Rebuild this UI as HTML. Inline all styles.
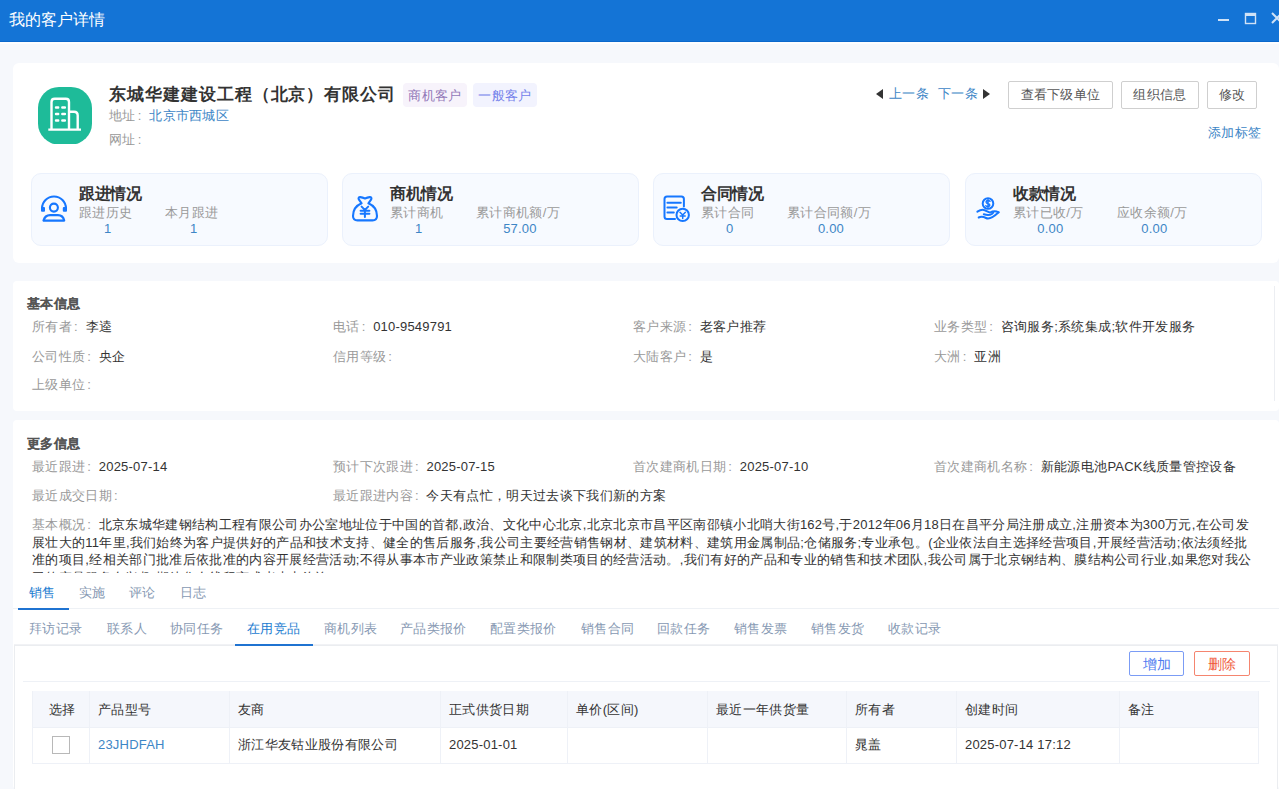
<!DOCTYPE html>
<html><head><meta charset="utf-8">
<style>
*{margin:0;padding:0;box-sizing:border-box}
html,body{width:1279px;height:789px;overflow:hidden;background:#f6f8fc;font-family:"Liberation Sans",sans-serif;font-size:13px;color:#333;letter-spacing:.33px}
.a{position:absolute;white-space:nowrap;line-height:1}
#hdr{position:absolute;left:0;top:0;width:1279px;height:42px;background:#1474d6;border-bottom:1px solid #0a68cc}
#hdr .t{left:9px;top:12px;font-size:16px;color:#fff;letter-spacing:0}
.card{position:absolute;background:#fff;border-radius:4px}
.lbl{color:#999}
.c{display:inline-block;width:13.5px;padding-left:2px}
.n{letter-spacing:.2px}
.val{color:#333}
.lnk{color:#3d86c6}
.btn{position:absolute;top:81px;height:28px;border:1px solid #cfcfcf;border-radius:2px;background:#fff;color:#555;font-size:13px;line-height:26px;text-align:center}
.tag{position:absolute;top:83px;height:24px;border-radius:4px;line-height:25px;font-size:13px;text-align:center}
.sc{position:absolute;top:173px;width:297px;height:73px;background:#f7faff;border:1px solid #ebf1fc;border-radius:10px}
.sc .ti{position:absolute;left:47px;top:12px;font-size:16px;font-weight:bold;color:#333;line-height:1;letter-spacing:-.3px}
.sc .it{position:absolute;top:32px;line-height:1}
.sc .it .l{color:#999;font-size:13px;line-height:1;white-space:nowrap}
.sc .it .v{color:#3d86c6;font-size:13px;text-align:center;margin-top:3px;line-height:1;padding-left:4px}
.sc svg{position:absolute}
.sec{position:absolute;left:27px;font-size:13px;font-weight:bold;color:#555;-webkit-text-stroke:.1px #555}
.row{position:absolute;white-space:nowrap;line-height:1;font-size:13px}
.tab{position:absolute;top:586px;font-size:13px;color:#8799b3;line-height:1}
.stab{position:absolute;top:622px;font-size:13px;color:#8799b3;line-height:1}
table{position:absolute;left:32px;top:690px;border-collapse:collapse;table-layout:fixed;font-size:13px}
td,th{border:1px solid #edf0f5;height:36px;padding:0 9px;text-align:left;font-weight:normal;white-space:nowrap}
th{background:#f5f7fc;color:#333}
</style></head><body>
<div id="hdr"><div class="a t">我的客户详情</div>
<svg style="position:absolute;left:1212px;top:8px" width="67" height="22">
<rect x="6" y="11" width="11" height="2" fill="#d0e2f6"/>
<rect x="33.5" y="5.5" width="10" height="10" fill="none" stroke="#d0e2f6" stroke-width="1.4"/>
<rect x="33" y="5" width="11" height="3" fill="#d0e2f6"/>
<path d="M60 5 L70 15 M70 5 L60 15" stroke="#d0e2f6" stroke-width="2"/>
</svg>
</div>

<!-- top card -->
<div style="position:absolute;left:0;top:42px;width:1279px;height:2px;background:#fcfdff"></div>
<div class="card" style="left:13px;top:63px;width:1266px;height:200px;border-radius:6px"></div>
<svg style="position:absolute;left:38px;top:87px" width="54" height="57" viewBox="0 0 54 57">
<rect x="0" y="0" width="54" height="57.5" rx="21" ry="21" fill="#1ebb99"/>
<g fill="none" stroke="#fff" stroke-width="2.4">
<path d="M10.3 42.6 H43"/>
<path d="M13.5 42.6 V15 Q13.5 11.8 16.7 11.8 H27.8 Q31 11.8 31 15 V42.6"/>
<path d="M31 24.8 H36 Q39.7 24.8 39.7 28.5 V42.6"/>
</g>
<g stroke="#fff" stroke-width="2.4" stroke-linecap="round">
<path d="M18 20.5 H20.2 M24.3 20.5 H26.9 M18 27 H20.2 M24.3 27 H26.9 M18 33.5 H20.2 M24.3 33.5 H26.9"/>
</g>
</svg>
<div class="a" style="left:109px;top:86px;font-size:17px;font-weight:bold;color:#333;letter-spacing:.95px">东城华建建设工程（北京）有限公司</div>
<div class="tag" style="left:403px;width:64px;background:#f7f3fb;color:#9278b8">商机客户</div>
<div class="tag" style="left:473px;width:64px;background:#f2f3fe;color:#7280ea">一般客户</div>
<div class="a" style="left:109px;top:109px"><span class="lbl">地址<span class="c">:</span></span><span class="lnk">北京市西城区</span></div>
<div class="a lbl" style="left:109px;top:133px">网址<span class="c">:</span></div>

<svg style="position:absolute;left:876px;top:89px" width="8" height="10"><path d="M7 0 V10 L0 5Z" fill="#333"/></svg>
<div class="a lnk" style="left:889px;top:87px">上一条</div>
<div class="a lnk" style="left:938px;top:87px">下一条</div>
<svg style="position:absolute;left:983px;top:89px" width="8" height="10"><path d="M0 0 V10 L7 5Z" fill="#333"/></svg>
<div class="btn" style="left:1008px;width:105px">查看下级单位</div>
<div class="btn" style="left:1121px;width:78px">组织信息</div>
<div class="btn" style="left:1207px;width:50px">修改</div>
<div class="a lnk" style="left:1208px;top:126px">添加标签</div>

<!-- stat cards -->
<div class="sc" style="left:31px">
<svg style="left:4px;top:16px" width="36" height="36" viewBox="0 0 36 36"><g fill="none" stroke="#1677ff" stroke-width="2.1"><path d="M6 18.5 A12 12 0 0 1 30 18.5"/><circle cx="17.9" cy="17.6" r="4"/><path d="M7.5 30.6 H28.2 Q27 25.1 22 25.1 H14 Q9 25.1 7.5 30.6 Z" stroke-linejoin="round" stroke-width="2.2"/></g><rect x="5" y="17" width="4" height="4.8" rx="1" fill="#1677ff"/><rect x="26.8" y="17" width="4.2" height="4.8" rx="1" fill="#1677ff"/></svg>
<div class="ti">跟进情况</div>
<div class="it" style="left:47px"><div class="l">跟进历史</div><div class="v">1</div></div>
<div class="it" style="left:133px"><div class="l">本月跟进</div><div class="v">1</div></div>
</div>
<div class="sc" style="left:342px">
<svg style="left:4px;top:16px" width="36" height="36" viewBox="0 0 36 36"><path d="M14.6 13.3 L11.8 9.4 Q10.9 7.2 13.2 7.1 Q15.6 7.5 18 8.4 Q20.4 7.5 22.8 7.1 Q25.1 7.2 24.2 9.4 L21.4 13.3 Q30 17 30 26 Q30 30.4 25.5 30.4 H10.5 Q6 30.4 6 26 Q6 17 14.6 13.3 Z" fill="none" stroke="#1677ff" stroke-width="2.1" stroke-linejoin="round"/><g stroke="#1677ff" stroke-width="2" fill="none" stroke-linecap="round"><path d="M14.6 16.6 L17.9 19.9 L21.2 16.6 M17.9 19.9 V27 M13.6 20.8 H22.4 M13.6 23.8 H22.4"/></g></svg>
<div class="ti">商机情况</div>
<div class="it" style="left:47px"><div class="l">累计商机</div><div class="v">1</div></div>
<div class="it" style="left:133px"><div class="l">累计商机额/万</div><div class="v"><span class="n">57.00</span></div></div>
</div>
<div class="sc" style="left:653px">
<svg style="left:4px;top:16px" width="36" height="36" viewBox="0 0 36 36"><g fill="none" stroke="#1677ff" stroke-width="2" stroke-linecap="round"><path d="M17 28.9 H9 Q6.5 28.9 6.5 26.4 V9 Q6.5 6.5 9 6.5 H23.4 Q25.9 6.5 25.9 9 V16.5"/><path d="M9.4 12.8 H22.8 M9.4 17.6 H18.7 M9.4 22.6 H15.8"/><circle cx="24.7" cy="24.9" r="6.2"/></g><g fill="none" stroke="#1677ff" stroke-width="1.5" stroke-linecap="round"><path d="M22 22.2 L24.7 25 L27.4 22.2 M24.7 25 V28.6 M22.2 26 H27.2"/></g></svg>
<div class="ti">合同情况</div>
<div class="it" style="left:47px"><div class="l">累计合同</div><div class="v">0</div></div>
<div class="it" style="left:133px"><div class="l">累计合同额/万</div><div class="v"><span class="n">0.00</span></div></div>
</div>
<div class="sc" style="left:965px">
<svg style="left:4px;top:16px" width="36" height="36" viewBox="0 0 36 36"><g fill="none" stroke="#1677ff" stroke-width="2" stroke-linecap="round" stroke-linejoin="round"><circle cx="18" cy="13.5" r="5.3"/><path d="M7.4 21.7 C10 20 12.5 19.2 15 20.3 C17 21.2 18.5 22 20 22.6 C22 21.5 25 20.5 28.6 22.3"/><path d="M8.7 27.5 C11 26.4 13.5 26.8 16 28 C19 29.4 22 28.6 28.6 22.3"/><path d="M13.8 24.3 C16.5 25.2 19.5 25.5 21.8 24 L23.3 22.6"/></g><path d="M20 11.3 Q19 10.4 17.8 10.5 Q16 10.7 16.2 12.2 Q16.5 13.3 18 13.6 Q19.8 14 19.8 15.2 Q19.6 16.6 17.8 16.5 Q16.6 16.4 15.8 15.7 M18 9.6 V17.5" fill="none" stroke="#1677ff" stroke-width="1.5" stroke-linecap="round"/></svg>
<div class="ti">收款情况</div>
<div class="it" style="left:47px"><div class="l">累计已收/万</div><div class="v"><span class="n">0.00</span></div></div>
<div class="it" style="left:151px"><div class="l">应收余额/万</div><div class="v"><span class="n">0.00</span></div></div>
</div>

<!-- basic info -->
<div class="card" style="left:13px;top:281px;width:1266px;height:130px"></div>
<div style="position:absolute;left:1274px;top:286px;width:1px;height:115px;background:#eceef2"></div>
<div class="a sec" style="top:297px">基本信息</div>
<div class="row" style="left:32px;top:320px"><span class="lbl">所有者<span class="c">:</span></span>李逵</div>
<div class="row" style="left:333px;top:320px"><span class="lbl">电话<span class="c">:</span></span><span class="n">010-9549791</span></div>
<div class="row" style="left:633px;top:320px"><span class="lbl">客户来源<span class="c">:</span></span>老客户推荐</div>
<div class="row" style="left:934px;top:320px"><span class="lbl">业务类型<span class="c">:</span></span>咨询服务;系统集成;软件开发服务</div>
<div class="row" style="left:32px;top:350px"><span class="lbl">公司性质<span class="c">:</span></span>央企</div>
<div class="row" style="left:333px;top:350px"><span class="lbl">信用等级<span class="c">:</span></span></div>
<div class="row" style="left:633px;top:350px"><span class="lbl">大陆客户<span class="c">:</span></span>是</div>
<div class="row" style="left:934px;top:350px"><span class="lbl">大洲<span class="c">:</span></span>亚洲</div>
<div class="row" style="left:32px;top:378px"><span class="lbl">上级单位<span class="c">:</span></span></div>

<!-- more info -->
<div class="card" style="left:13px;top:420px;width:1266px;height:369px"></div>
<div class="a sec" style="top:437px">更多信息</div>
<div class="row" style="left:32px;top:460px"><span class="lbl">最近跟进<span class="c">:</span></span><span class="n">2025-07-14</span></div>
<div class="row" style="left:333px;top:460px"><span class="lbl">预计下次跟进<span class="c">:</span></span><span class="n">2025-07-15</span></div>
<div class="row" style="left:633px;top:460px"><span class="lbl">首次建商机日期<span class="c">:</span></span><span class="n">2025-07-10</span></div>
<div class="row" style="left:934px;top:460px"><span class="lbl">首次建商机名称<span class="c">:</span></span>新能源电池<span class="n">PACK</span>线质量管控设备</div>
<div class="row" style="left:32px;top:489px"><span class="lbl">最近成交日期<span class="c">:</span></span></div>
<div class="row" style="left:333px;top:489px"><span class="lbl">最近跟进内容<span class="c">:</span></span>今天有点忙，明天过去谈下我们新的方案</div>
<div style="position:absolute;left:32px;top:516px;width:1240px;height:57px;overflow:hidden;font-size:13px;line-height:17.5px;color:#333;white-space:nowrap">
<div><span class="lbl">基本概况<span class="c">:</span></span>北京东城华建钢结构工程有限公司办公室地址位于中国的首都,政治、文化中心北京,北京北京市昌平区南邵镇小北哨大街<span class="n">162</span>号,于<span class="n">2012</span>年<span class="n">06</span>月<span class="n">18</span>日在昌平分局注册成立,注册资本为<span class="n">300</span>万元,在公司发</div>
<div>展壮大的<span class="n">11</span>年里,我们始终为客户提供好的产品和技术支持、健全的售后服务,我公司主要经营销售钢材、建筑材料、建筑用金属制品;仓储服务;专业承包。(企业依法自主选择经营项目,开展经营活动;依法须经批</div>
<div>准的项目,经相关部门批准后依批准的内容开展经营活动;不得从事本市产业政策禁止和限制类项目的经营活动。,我们有好的产品和专业的销售和技术团队,我公司属于北京钢结构、膜结构公司行业,如果您对我公</div>
<div>司的产品服务有兴趣,期待您在线留言或者来电咨询</div>
</div>

<!-- tabs -->
<div style="position:absolute;left:13px;top:608px;width:1266px;height:1px;background:#eef1f5"></div>
<div class="tab" style="left:29px;color:#1a7bd0">销售</div>
<div class="tab" style="left:79px">实施</div>
<div class="tab" style="left:129px">评论</div>
<div class="tab" style="left:180px">日志</div>
<div style="position:absolute;left:18px;top:608px;width:51px;height:2px;background:#1f73d1"></div>

<div class="stab" style="left:29px">拜访记录</div>
<div class="stab" style="left:107px">联系人</div>
<div class="stab" style="left:170px">协同任务</div>
<div class="stab" style="left:247px;color:#1a7bd0">在用竞品</div>
<div class="stab" style="left:324px">商机列表</div>
<div class="stab" style="left:400px">产品类报价</div>
<div class="stab" style="left:490px">配置类报价</div>
<div class="stab" style="left:581px">销售合同</div>
<div class="stab" style="left:657px">回款任务</div>
<div class="stab" style="left:734px">销售发票</div>
<div class="stab" style="left:811px">销售发货</div>
<div class="stab" style="left:888px">收款记录</div>

<div style="position:absolute;left:14px;top:645px;width:1264px;height:160px;border:1px solid #ebedf0;background:#fff"></div>
<div style="position:absolute;left:14px;top:644px;width:1264px;height:1px;background:#f1f2f5"></div>
<div style="position:absolute;left:235px;top:644px;width:78px;height:2px;background:#1f73d1"></div>
<div style="position:absolute;left:23px;top:681px;width:1247px;height:1px;background:#eef1f6"></div>
<div class="a" style="left:1129px;top:651px;width:55px;height:25px;border:1px solid #7b9cf5;border-radius:2px;color:#4f7cf0;line-height:24px;text-align:center;font-size:14px;letter-spacing:0">增加</div>
<div class="a" style="left:1194px;top:651px;width:56px;height:25px;border:1px solid #f5856f;border-radius:2px;color:#f05a3c;line-height:24px;text-align:center;font-size:14px;letter-spacing:0">删除</div>

<div style="position:absolute;left:32px;top:691px;width:1227px;height:36px;background:#f5f7fc"></div>
<div style="position:absolute;left:32px;top:727px;width:1227px;height:1px;background:#eef1f7"></div>
<div style="position:absolute;left:32px;top:763px;width:1227px;height:1px;background:#eef1f7"></div>
<div style="position:absolute;left:32px;top:691px;width:1px;height:73px;background:#eef1f7"></div>
<div style="position:absolute;left:89px;top:691px;width:1px;height:73px;background:#eef1f7"></div>
<div style="position:absolute;left:229px;top:691px;width:1px;height:73px;background:#eef1f7"></div>
<div style="position:absolute;left:440px;top:691px;width:1px;height:73px;background:#eef1f7"></div>
<div style="position:absolute;left:567px;top:691px;width:1px;height:73px;background:#eef1f7"></div>
<div style="position:absolute;left:707px;top:691px;width:1px;height:73px;background:#eef1f7"></div>
<div style="position:absolute;left:846px;top:691px;width:1px;height:73px;background:#eef1f7"></div>
<div style="position:absolute;left:956px;top:691px;width:1px;height:73px;background:#eef1f7"></div>
<div style="position:absolute;left:1119px;top:691px;width:1px;height:73px;background:#eef1f7"></div>
<div style="position:absolute;left:1258px;top:691px;width:1px;height:73px;background:#eef1f7"></div>
<div class="row" style="left:34px;width:57px;text-align:center;top:703px">选择</div>
<div class="row" style="left:98px;top:703px">产品型号</div>
<div class="row" style="left:238px;top:703px">友商</div>
<div class="row" style="left:449px;top:703px">正式供货日期</div>
<div class="row" style="left:576px;top:703px">单价(区间)</div>
<div class="row" style="left:716px;top:703px">最近一年供货量</div>
<div class="row" style="left:855px;top:703px">所有者</div>
<div class="row" style="left:965px;top:703px">创建时间</div>
<div class="row" style="left:1128px;top:703px">备注</div>
<div style="position:absolute;left:52px;top:736px;width:18px;height:18px;border:1px solid #b8b8b8;background:#fff"></div>
<div class="row" style="left:98px;top:738px"><span class="lnk"><span class="n">23JHDFAH</span></span></div>
<div class="row" style="left:238px;top:738px">浙江华友钴业股份有限公司</div>
<div class="row" style="left:449px;top:738px"><span class="n">2025-01-01</span></div>
<div class="row" style="left:855px;top:738px">晁盖</div>
<div class="row" style="left:965px;top:738px"><span class="n">2025-07-14 17:12</span></div>
</body></html>
